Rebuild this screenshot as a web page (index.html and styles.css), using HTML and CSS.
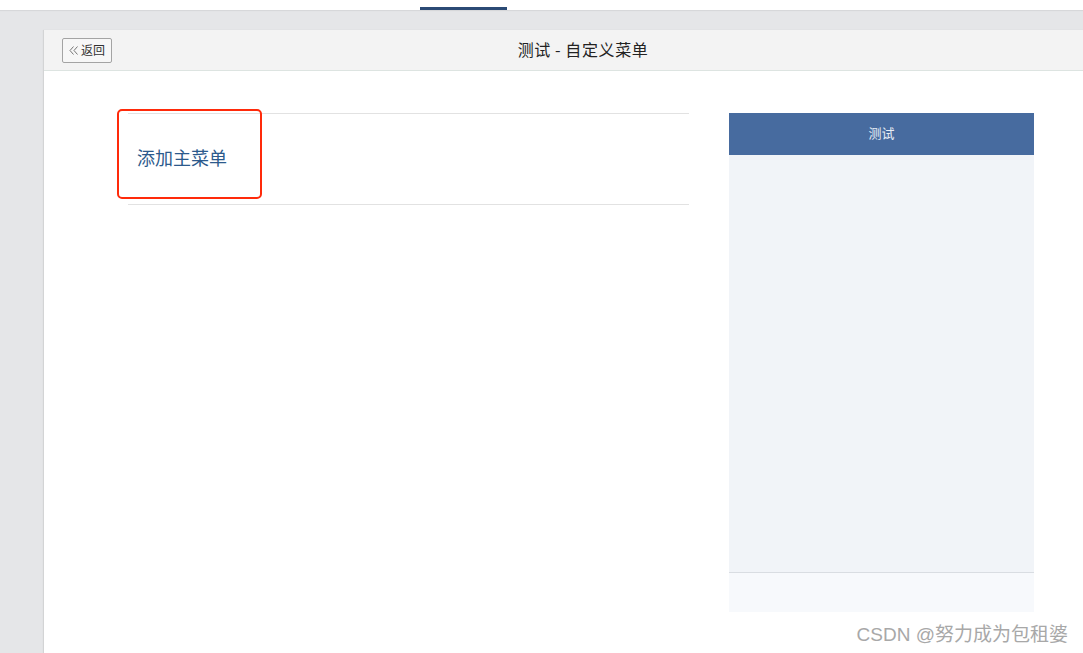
FILE: index.html
```html
<!DOCTYPE html>
<html lang="zh">
<head>
<meta charset="utf-8">
<link rel="stylesheet" href="styles.css">
</head>
<body>
<div class="topbar"><span class="tab-indicator"></span></div>
<div class="layout">
  <div class="panel">
    <div class="panel-header">
      <button class="back-btn"><svg class="chev" width="10" height="9" viewBox="0 0 10 9"><path d="M4.5 0.5 L1 4.5 L4.5 8.5 M8.5 0.5 L5 4.5 L8.5 8.5" fill="none" stroke="#666" stroke-width="0.9"/></svg>返回</button>
      <div class="title">测试 - 自定义菜单</div>
    </div>
    <div class="panel-body">
      <div class="menu-editor">
        <div class="menu-row">
          <span class="add-menu">添加主菜单</span>
        </div>
        <div class="highlight"></div>
      </div>
      <div class="phone">
        <div class="phone-head">测试</div>
        <div class="phone-screen"></div>
        <div class="phone-foot"></div>
      </div>
    </div>
  </div>
</div>
<div class="watermark">CSDN @努力成为包租婆</div>
</body>
</html>
```

FILE: styles.css
```css
html, body {
  margin: 0;
  padding: 0;
  width: 1083px;
  height: 653px;
  overflow: hidden;
  background: #e5e6e8;
  font-family: "Noto Sans CJK SC", "Liberation Sans", sans-serif;
  position: relative;
}
.topbar {
  height: 10px;
  background: #ffffff;
  display: flex;
  align-items: flex-end;
  padding-left: 420px;
  box-shadow: 0 1px 1px rgba(0,0,0,0.06);
}
.tab-indicator {
  display: block;
  width: 87px;
  height: 3px;
  background: #2b4a75;
}
.layout {
  display: flex;
  padding: 20px 0 0 44px;
}
.panel {
  width: 1078px;
  flex: none;
  height: 623px;
  background: #ffffff;
  box-shadow: -1px 0 1px rgba(0,0,0,0.08);
}
.panel-header {
  height: 40px;
  background: #f3f3f3;
  border-bottom: 1px solid #dde4e1;
  display: flex;
  align-items: center;
  padding-left: 18px;
  position: relative;
}
.back-btn {
  height: 25px;
  width: 50px;
  padding: 0;
  border: 1px solid #a4a4a4;
  border-radius: 2px;
  background: #f7f7f7;
  font-family: "Noto Sans CJK SC", sans-serif;
  font-size: 12px;
  color: #333;
  line-height: 22px;
  display: flex;
  align-items: center;
  justify-content: center;
  gap: 2px;
}
.chev {
  display: block;
}
.title {
  position: absolute;
  left: 0;
  right: 0;
  top: 8px;
  text-align: center;
  font-size: 16px;
  letter-spacing: 0.6px;
  line-height: 22px;
  color: #222;
  pointer-events: none;
}
.panel-body {
  display: flex;
  padding: 42px 0 0 84px;
  gap: 40px;
}
.menu-editor {
  width: 561px;
  position: relative;
}
.menu-row {
  border-top: 1px solid #e2e2e2;
  border-bottom: 1px solid #e2e2e2;
  display: flex;
  align-items: center;
  padding-left: 9px;
  padding-bottom: 4px;
  box-sizing: border-box;
  height: 92px;
}
.add-menu {
  font-size: 18px;
  color: #2c5a8c;
}
.highlight {
  position: absolute;
  left: -11px;
  top: -4px;
  width: 141px;
  height: 86px;
  border: 2px solid #ff2a0a;
  border-radius: 5px;
}
.phone {
  width: 305px;
  display: flex;
  flex-direction: column;
}
.phone-head {
  height: 42px;
  box-sizing: border-box;
  padding-bottom: 3px;
  background: #476b9f;
  color: #e8eef6;
  font-size: 13px;
  display: flex;
  align-items: center;
  justify-content: center;
}
.phone-screen {
  height: 417px;
  background: #f1f4f8;
  border-bottom: 1px solid #d9dde2;
}
.phone-foot {
  height: 39px;
  background: #f7f9fc;
}
.watermark {
  position: absolute;
  right: 15px;
  bottom: 7px;
  font-size: 19px;
  color: #a8a8a8;
  font-family: "Liberation Sans", "Noto Sans CJK SC", sans-serif;
}
```
